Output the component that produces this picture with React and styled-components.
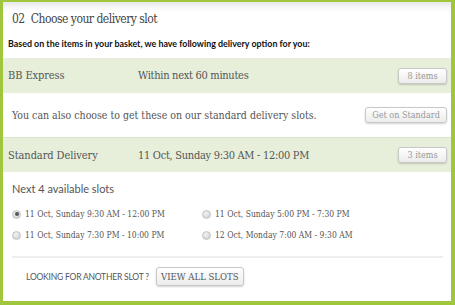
import React from "react";
import styled, { createGlobalStyle } from "styled-components";

const GREEN = "#9fc63c";
const ROW_BG = "#e7efda";
const SLAB = `"DejaVu Serif Condensed", "DejaVu Serif", "Liberation Serif", serif`;
const SANS = `Lato, "Open Sans", sans-serif`;

const GlobalStyle = createGlobalStyle`
    html, body {
        margin: 0;
        padding: 0;
        background: #fff;
    }
`

const Frame = styled.section`
    width: 455px;
    height: 305px;
    box-sizing: border-box;
    border-style: solid;
    border-color: ${GREEN};
    border-width: 2px 4px 4px 3px;
    background: #fff;
    box-shadow: inset 0 9px 8px -6px rgba(0,0,0,0.12);
    display: flex;
    flex-direction: column;
    overflow: hidden;
`

const Title = styled.h2`
    margin: 0;
    padding: 10px 0 0 9px;
    height: 22px;
    font-family: ${SLAB};
    font-stretch: condensed;
    font-weight: normal;
    font-size: 12px;
    letter-spacing: -0.5px;
    color: #444;
    span {
        margin-right: 6px;
    }
`

const Intro = styled.p`
    margin: 0;
    padding: 4px 0 0 5px;
    height: 20px;
    font-family: ${SANS};
    font-weight: bold;
    font-size: 8.9px;
    color: #111;
`

const Row = styled.div`
    display: flex;
    align-items: center;
    height: ${p => p.$h || 35}px;
    box-sizing: border-box;
    padding: 0 4px 0 5px;
    background: ${p => (p.$tinted ? ROW_BG : "#fff")};
    border-top: ${p => (p.$line ? "1px solid #dde5d0" : "none")};
`

const Label = styled.div`
    width: 130px;
    font-family: ${SLAB};
    font-stretch: condensed;
    font-size: 11px;
    letter-spacing: -0.1px;
    color: #555;
`

const Value = styled.div`
    flex: 1;
    font-family: ${SLAB};
    font-stretch: condensed;
    font-size: 11px;
    letter-spacing: -0.3px;
    color: #555;
`

const Note = styled.div`
    flex: 1;
    padding-left: 4px;
    font-family: ${SLAB};
    font-stretch: condensed;
    font-size: 10.5px;
    color: #555;
`

const Button = styled.button`
    flex: none;
    width: ${p => p.$w}px;
    height: ${p => p.$h || 16}px;
    padding: 0;
    border: 1px solid #c8c8c8;
    border-radius: 3px;
    background: linear-gradient(#ffffff, #ececec);
    box-shadow: 0 1px 2px rgba(0,0,0,0.18);
    font-family: ${SLAB};
    font-stretch: condensed;
    font-size: ${p => p.$fs || 9}px;
    color: ${p => p.$dark ? "#555" : "#999"};
    cursor: pointer;
`

const Slots = styled.div`
    padding: 10px 8px 0 9px;
    flex: 1;
    display: flex;
    flex-direction: column;
`

const SlotsHeading = styled.div`
    font-family: ${SANS};
    font-size: 11px;
    color: #555;
    height: 24px;
`

const SlotGrid = styled.div`
    display: grid;
    grid-template-columns: 190px 1fr;
    row-gap: 5px;
    padding-bottom: 13px;
    border-bottom: 2px solid #eee;
`

const Slot = styled.label`
    display: flex;
    align-items: center;
    height: 16px;
    gap: 4px;
    font-family: ${SLAB};
    font-stretch: condensed;
    font-size: 8.5px;
    color: #555;
`

const Radio = styled.span`
    box-sizing: border-box;
    width: 9px;
    height: 9px;
    border-radius: 50%;
    background: radial-gradient(circle at 40% 35%, #f4f4f4, #c8c8c8);
    border: 1px solid #c4c4c4;
    display: flex;
    align-items: center;
    justify-content: center;
    &::after {
        content: "";
        width: 4px;
        height: 4px;
        border-radius: 50%;
        background: ${p => (p.$on ? "#555" : "transparent")};
    }
`

const Footer = styled.div`
    display: flex;
    align-items: center;
    gap: 7px;
    padding: 9px 0 0 14px;
`

const FooterText = styled.span`
    font-family: ${SANS};
    font-size: 8.5px;
    color: #555;
    letter-spacing: -0.2px;
`

const slots = [
    { text: "11 Oct, Sunday 9:30 AM - 12:00 PM", on: true },
    { text: "11 Oct, Sunday 5:00 PM - 7:30 PM" },
    { text: "11 Oct, Sunday 7:30 PM - 10:00 PM" },
    { text: "12 Oct, Monday 7:00 AM - 9:30 AM" },
];

export default function App() {
    return (
        <>
            <GlobalStyle />
            <Frame>
                <Title><span>02</span>Choose your delivery slot</Title>
                <Intro>Based on the items in your basket, we have following delivery option for you:</Intro>

                <Row $tinted>
                    <Label>BB Express</Label>
                    <Value>Within next 60 minutes</Value>
                    <Button $w={49}>8 items</Button>
                </Row>
                <Row $h={44}>
                    <Note>You can also choose to get these on our standard delivery slots.</Note>
                    <Button $w={82}>Get on Standard</Button>
                </Row>
                <Row $tinted $line>
                    <Label>Standard Delivery</Label>
                    <Value>11 Oct, Sunday 9:30 AM - 12:00 PM</Value>
                    <Button $w={49}>3 items</Button>
                </Row>

                <Slots>
                    <SlotsHeading>Next 4 available slots</SlotsHeading>
                    <SlotGrid>
                        {slots.map(s => (
                            <Slot key={s.text}>
                                <Radio $on={s.on} />
                                {s.text}
                            </Slot>
                        ))}
                    </SlotGrid>
                    <Footer>
                        <FooterText>LOOKING FOR ANOTHER SLOT ?</FooterText>
                        <Button $w={88} $h={19} $fs={9.5} $dark>VIEW ALL SLOTS</Button>
                    </Footer>
                </Slots>
            </Frame>
        </>
    );
}
